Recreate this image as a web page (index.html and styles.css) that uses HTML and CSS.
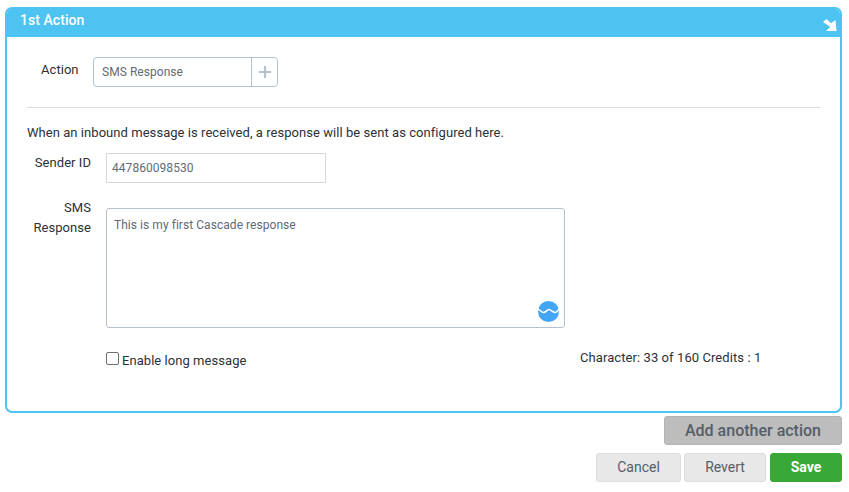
FILE: index.html
```html
<!DOCTYPE html>
<html lang="en">
<head>
<meta charset="utf-8">
<title>1st Action</title>
<link rel="stylesheet" href="styles.css">
</head>
<body>
<section class="panel">
  <header class="panel-head">
    <span class="panel-title">1st Action</span>
    <svg class="collapse-icon" width="14" height="12" viewBox="0 0 14 12"><path fill="#fff" d="M0 3 3.500 0 8 4.300 12.500 1 13.500 12 3 12 7.300 8Z"/></svg>
  </header>
  <div class="panel-body">
    <div class="action-row">
      <span class="action-label">Action</span>
      <div class="action-select">
        <span class="action-value">SMS Response</span>
        <span class="action-add"><svg width="14" height="14" viewBox="0 0 14 14"><path fill="none" stroke="#b4c2d0" stroke-width="2" d="M7 1v12M1 7h12"/></svg></span>
      </div>
    </div>
    <hr class="divider">
    <p class="intro">When an inbound message is received, a response will be sent as configured here.</p>
    <div class="field sender-field">
      <label class="field-label">Sender ID</label>
      <div class="sender-input">447860098530</div>
    </div>
    <div class="field response-field">
      <label class="field-label response-label">SMS Response</label>
      <div class="response-box">
        This is my first Cascade response
        <svg class="wave-icon" width="21" height="21" viewBox="0 0 21 21"><circle cx="10.500" cy="10.500" r="10.500" fill="#42a5f5"/><path fill="none" stroke="#fff" stroke-width="1.600" d="M0 8.500C2.500 8.500 3 11.500 5.500 11.500S9 8.500 11 8.500 14.500 11.500 17 11.500 19.500 9 21 8.500"/></svg>
      </div>
    </div>
    <div class="options-row">
      <label class="long-option"><span class="check-box"></span>Enable long message</label>
      <span class="counter">Character: 33 of 160 Credits : 1</span>
    </div>
  </div>
</section>
<div class="add-row"><button class="btn btn-add">Add another action</button></div>
<div class="actions-row">
  <button class="btn btn-light btn-cancel">Cancel</button>
  <button class="btn btn-light btn-revert">Revert</button>
  <button class="btn btn-save">Save</button>
</div>
</body>
</html>
```
FILE: styles.css
```css
* { box-sizing: border-box; }
html, body { margin: 0; padding: 0; }
body {
  padding: 7px 7px 0 5px;
  background: #fff;
  font-family: Roboto, "Liberation Sans", sans-serif;
  font-size: 13px;
  letter-spacing: 0.05px;
  color: #2b3138;
  width: 849px;
  height: 492px;
  overflow: hidden;
}
.panel {
  width: 837px;
  height: 406px;
  border: 2px solid #4dc3f2;
  border-radius: 7px;
  overflow: hidden;
}
.panel-head {
  height: 29px;
  margin-top: -1px;
  padding: 0 2px 0 13px;
  background: #4dc3f2;
  display: flex;
  justify-content: space-between;
  align-items: flex-start;
}
.panel-title {
  color: #fff;
  font-size: 14px;
  font-weight: 500;
  line-height: 24px;
}
.collapse-icon { margin-top: 11px; margin-right: 1px; }
.panel-body { padding: 20px 20px 0; }
.action-row { display: flex; align-items: center; height: 30px; }
.action-label { width: 66px; padding-left: 14px; font-size: 13px; line-height: 26px; align-self: flex-start; }
.action-select {
  width: 185px;
  height: 30px;
  border: 1px solid #b4c2d0;
  border-radius: 4px;
  display: flex;
}
.action-value { flex: 1; padding-left: 8px; line-height: 28px; font-size: 12px; color: #5f6b77; }
.action-add {
  width: 26px;
  border-left: 1px solid #b4c2d0;
  display: flex;
  align-items: center;
  justify-content: center;
}
.divider { margin: 20px 0 0; width: 793px; border: 0; border-top: 1px solid #d6dbdf; }
.intro { margin: 17px 0 0; line-height: 15px; font-size: 13px; }
.field { display: flex; }
.field-label { width: 64px; margin-right: 15px; text-align: right; font-size: 13px; }
.sender-field { margin-top: 13px; }
.sender-field .field-label { line-height: 20px; }
.sender-input {
  width: 220px;
  height: 30px;
  border: 1px solid #d4d8db;
  padding-left: 5px;
  line-height: 28px;
  font-size: 12px;
  color: #5f6b77;
}
.response-field { margin-top: 25px; }
.response-label { line-height: 20px; margin-top: -10px; }
.response-box {
  position: relative;
  width: 459px;
  height: 120px;
  border: 1px solid #b4c2d0;
  border-radius: 3px;
  padding: 8px 7px;
  line-height: 16px;
  font-size: 12px;
  color: #5f6b77;
}
.wave-icon { position: absolute; right: 5px; bottom: 5px; }
.options-row { display: flex; margin-top: 21px; padding-left: 79px; height: 24px; }
.long-option { display: flex; width: 474px; font-size: 13px; line-height: 24px; }
.check-box {
  width: 13px;
  height: 13px;
  margin: 3px 3px 0 0;
  border: 1px solid #6f6f6f;
  border-radius: 2px;
}
.counter { font-size: 13px; line-height: 18px; letter-spacing: 0.08px; }
.btn {
  border-radius: 3px;
  font-family: inherit;
  height: 29px;
  padding: 0;
  cursor: pointer;
}
.add-row { display: flex; justify-content: flex-end; margin-top: 3px; }
.btn-add {
  width: 178px;
  background: #bdbdbd;
  border: 1px solid #b2b2b2;
  color: #555e67;
  font-size: 16px;
  font-weight: 500;
}
.actions-row { display: flex; justify-content: flex-end; margin-top: 8px; }
.btn-light {
  padding-bottom: 2px;
  background: #e8e8e8;
  border: 1px solid #dcdcdc;
  color: #555e67;
  font-size: 14px;
}
.btn-cancel { width: 85px; margin-right: 3px; }
.btn-revert { width: 82px; margin-right: 4px; }
.btn-save {
  padding-bottom: 2px;
  width: 72px;
  background: #38a936;
  border: 1px solid #38a936;
  color: #fff;
  font-size: 14px;
  font-weight: 700;
}
```
